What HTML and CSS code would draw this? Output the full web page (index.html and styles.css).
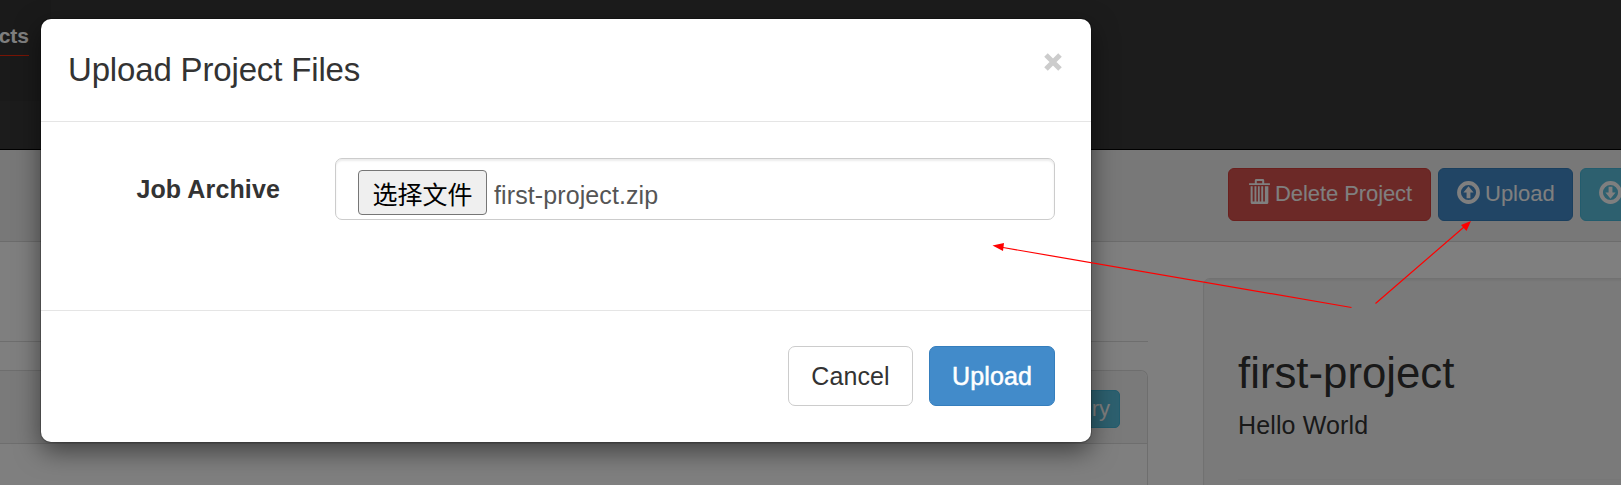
FILE: index.html
```html
<!DOCTYPE html>
<html lang="en">
<head>
<meta charset="utf-8">
<title>Upload Project Files</title>
<link rel="stylesheet" href="styles.css">
</head>
<body>
<div class="page">
  <header class="navbar"><div class="brand"><span class="nav-link">cts</span></div></header>
  <div class="toolbar">
    <div class="btn danger">
      <svg class="trash" viewBox="0 0 20 24"><path d="M0 4h20v1.8H0zM5.500 4V1.5Q5.500 .1 7 .1h6Q14.500 .1 14.500 1.500V4h-1.900V1.900H7.400V4zM1.500 7h17v15.500q0 1.500-1.500 1.500H3q-1.500 0-1.500-1.500zm1.900 0v14.500h1.800V7zm3.600 0v14.500h1.500V7zm3.200 0v14.500h1.500V7zm3.300 0v14.500h1.700V7z" fill-rule="evenodd"/></svg>
      <span>Delete Project</span>
    </div>
    <div class="btn primary">
      <svg class="circle" viewBox="0 0 24 24"><circle cx="12" cy="12" r="9.900"/><path d="M12 5.500 17.300 12H14v6H10v-6H6.700z"/></svg>
      <span>Upload</span>
    </div>
    <div class="btn info">
      <svg class="circle" viewBox="0 0 24 24"><circle cx="12" cy="12" r="9.900"/><path d="M12 18.500 6.700 12H10V6h4v6h3.300z"/></svg>
    </div>
  </div>
  <main class="content">
    <section class="main-col">
      <div class="rule"></div>
      <div class="panel"><div class="panel-head"><div class="btn-small">ry</div></div></div>
    </section>
    <aside class="well">
      <h1>first-project</h1>
      <p>Hello World</p>
      <div class="well-rule"></div>
    </aside>
  </main>
</div>
<div class="backdrop"></div>
<div class="modal">
  <div class="modal-head"><h4>Upload Project Files</h4>
    <svg class="close" viewBox="0 0 18 18"><path d="M2 2 16 16M16 2 2 16"/></svg>
  </div>
  <div class="modal-body">
    <label>Job Archive</label>
    <div class="file"><span class="choose">选择文件</span><span class="name">first-project.zip</span></div>
  </div>
  <div class="modal-foot"><div class="action cancel">Cancel</div><div class="action upload">Upload</div></div>
</div>
<svg class="arrows" viewBox="0 0 1621 485">
  <path class="shaft" d="M1351.500 307.500 1003 247.500M1375.500 303.500 1464 227"/>
  <path d="M992.500 245.500 1004 243 1003 251zM1471 221 1466.500 231 1461 225z"/>
</svg>
</body>
</html>
```
FILE: styles.css
```css
* { box-sizing: border-box; }
body { margin: 0; width: 1621px; height: 485px; overflow: hidden; font: 25px/35px "Liberation Sans", Arial, "Noto Sans CJK SC", sans-serif; color: #333; background: #fff; }
h1, h4, p { margin: 0; font-weight: 400; }
.page { height: 485px; overflow: hidden; }
.navbar { height: 150px; background: #393939; border-bottom: 1px solid #000; }
.brand { width: 51px; height: 101px; padding-top: 18px; background: #343434; }
.nav-link { width: 29px; height: 38px; border-bottom: 1px solid #f0280a; display: flex; justify-content: flex-end; font-size: 21px; font-weight: 700; color: #fff; }
.toolbar { height: 92px; padding: 18px 0 0 1228px; display: flex; gap: 7px; background: #f0f0f0; border-bottom: 1px solid #d8d8d8; }
.btn { flex: none; height: 53px; display: flex; padding: 8px 0 0 18px; border: 1px solid; border-radius: 6px; color: #fff; font-size: 22px; line-height: 34px; white-space: nowrap; }
.danger { width: 203px; background: #d9534f; border-color: #d43f3a; padding-left: 20px; }
.danger span { letter-spacing: -.08px; }
.primary { width: 135px; background: #428bca; border-color: #357ebd; }
.info { width: 150px; background: #5bc0de; border-color: #46b8da; }
.btn svg { flex: none; fill: #fff; }
.trash { width: 21px; height: 25px; margin: 2px 5px 0 0; }
.circle { width: 23px; height: 23px; margin: 4px 5px 0 0; }
.circle circle { fill: none; stroke: #fff; stroke-width: 4; }
.content { display: flex; height: 243px; }
.main-col { flex: none; width: 1148px; padding-top: 99px; }
.rule { height: 1px; background: #ddd; }
.panel { margin-top: 28px; height: 150px; border: 1px solid #ddd; border-left: 0; border-radius: 0 7px 0 0; }
.panel-head { height: 73px; padding: 19px 27px 0 0; background: #f5f5f5; border-bottom: 1px solid #ddd; border-radius: 0 7px 0 0; display: flex; justify-content: flex-end; }
.btn-small { height: 38px; padding: 0 9px 0 40px; background: #5bc0de; border: 1px solid #46b8da; border-radius: 5px; color: #fff; font-size: 22px; line-height: 36px; }
.well { flex: none; width: 440px; height: 260px; margin: 36px 0 0 55px; padding: 70px 0 0 34px; background: #f5f5f5; border: 1px solid #e3e3e3; border-radius: 7px; box-shadow: inset 0 2px 2px rgba(0,0,0,.05); }
.well h1 { font-size: 43.75px; line-height: 48px; }
.well p { margin-top: 11px; letter-spacing: .13px; }
.well-rule { margin-top: 36px; height: 1px; background: #eee; }
.backdrop { position: absolute; inset: 0; background: rgba(0,0,0,.5); }
.modal { position: absolute; left: 41px; top: 19px; width: 1050px; height: 423px; background: #fff; border-radius: 10px; box-shadow: 0 0 0 1px rgba(0,0,0,.2), 0 9px 26px rgba(0,0,0,.5); }
.modal-head { height: 103px; display: flex; justify-content: space-between; padding: 32px 29px 0 27px; border-bottom: 1px solid #e5e5e5; }
.modal-head h4 { font-size: 33px; line-height: 38px; letter-spacing: -.16px; }
.close { width: 18px; height: 18px; margin-top: 2px; stroke: #ccc; stroke-width: 5; }
.modal-body { height: 188px; padding-top: 36px; display: flex; }
label { width: 239px; margin-right: 55px; padding-top: 14px; text-align: right; font-weight: 700; letter-spacing: .13px; }
.file { width: 720px; height: 62px; padding: 11px 22px; display: flex; align-items: flex-start; gap: 7px; border: 1px solid #ccc; border-radius: 7px; box-shadow: inset 0 2px 2px rgba(0,0,0,.075); color: #555; }
.choose { width: 129px; height: 45px; text-align: center; line-height: 45px; font-size: 25px; font-family: "Noto Sans CJK SC", sans-serif; background: #efefef; color: #000; border: 1px solid #767676; border-radius: 4px; }
.name { padding-top: 8px; letter-spacing: .1px; }
.modal-foot { border-top: 1px solid #e5e5e5; height: 132px; padding: 35px 36px 0; display: flex; justify-content: flex-end; gap: 16px; }
.action { height: 60px; border: 1px solid #ccc; border-radius: 7px; text-align: center; line-height: 58px; letter-spacing: .1px; }
.cancel { width: 125px; }
.upload { width: 126px; color: #fff; background: #428bca; border-color: #357ebd; -webkit-text-stroke: .5px #fff; }
.arrows { position: absolute; left: 0; top: 0; width: 1621px; height: 485px; fill: #f00; }
.shaft { fill: none; stroke: #f00; stroke-width: 1.2; }
```
